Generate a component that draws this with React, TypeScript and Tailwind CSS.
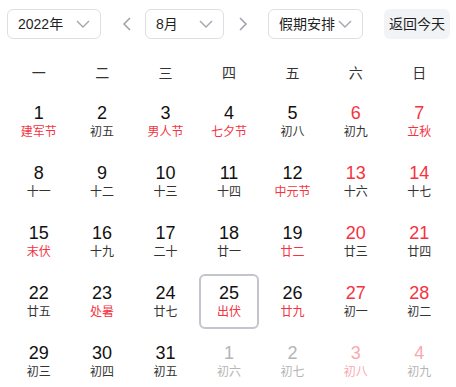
import React from 'react';

type Day = { d: number; l: string; red?: boolean; fest?: boolean; other?: boolean; sel?: boolean };

const font = { fontFamily: '"Liberation Sans", "Noto Sans CJK SC", sans-serif' };

const days: Day[] = [
  { d: 1, l: '建军节', fest: true },
  { d: 2, l: '初五' },
  { d: 3, l: '男人节', fest: true },
  { d: 4, l: '七夕节', fest: true },
  { d: 5, l: '初八' },
  { d: 6, l: '初九', red: true },
  { d: 7, l: '立秋', red: true, fest: true },
  { d: 8, l: '十一' },
  { d: 9, l: '十二' },
  { d: 10, l: '十三' },
  { d: 11, l: '十四' },
  { d: 12, l: '中元节', fest: true },
  { d: 13, l: '十六', red: true },
  { d: 14, l: '十七', red: true },
  { d: 15, l: '末伏', fest: true },
  { d: 16, l: '十九' },
  { d: 17, l: '二十' },
  { d: 18, l: '廿一' },
  { d: 19, l: '廿二', fest: true },
  { d: 20, l: '廿三', red: true },
  { d: 21, l: '廿四', red: true },
  { d: 22, l: '廿五' },
  { d: 23, l: '处暑', fest: true },
  { d: 24, l: '廿七' },
  { d: 25, l: '出伏', fest: true, sel: true },
  { d: 26, l: '廿九', fest: true },
  { d: 27, l: '初一', red: true },
  { d: 28, l: '初二', red: true },
  { d: 29, l: '初三' },
  { d: 30, l: '初四' },
  { d: 31, l: '初五' },
  { d: 1, l: '初六', other: true },
  { d: 2, l: '初七', other: true },
  { d: 3, l: '初八', other: true, red: true, fest: true },
  { d: 4, l: '初九', other: true, red: true },
];

const Chevron = ({ dir = 'down' }: { dir?: 'down' | 'left' | 'right' }) => {
  if (dir === 'down')
    return (
      <svg width="14" height="8" viewBox="0 0 14 8" fill="none" stroke="#a3a6ad" strokeWidth="1.4">
        <path d="M1 1l6 6 6-6" />
      </svg>
    );
  return (
    <svg width="9" height="14" viewBox="0 0 9 14" fill="none" stroke="#9ea1a8" strokeWidth="1.5">
      <path d={dir === 'left' ? 'M8 1L2 7l6 6' : 'M1 1l6 6-6 6'} />
    </svg>
  );
};

const Select = ({ label, w }: { label: string; w: string }) => (
  <div className={`flex h-[30px] ${w} items-center justify-between rounded-[6px] border border-[#dcdfe6] bg-white pl-[10px] pr-[10px] text-[14px] text-[#1f1f1f]`}>
    <span>{label}</span>
    <Chevron />
  </div>
);

export default function App() {
  return (
    <div className="h-[387px] w-[456px] overflow-hidden bg-white" style={font}>
      <div className="flex items-center pl-[7px] pt-[9px]">
        <Select label="2022年" w="w-[94px]" />
        <div className="ml-[21px] flex w-[9px] justify-center">
          <Chevron dir="left" />
        </div>
        <div className="ml-[14px]">
          <Select label="8月" w="w-[79px]" />
        </div>
        <div className="ml-[15px] flex w-[9px] justify-center">
          <Chevron dir="right" />
        </div>
        <div className="ml-[20px]">
          <Select label="假期安排" w="w-[95px]" />
        </div>
        <div className="ml-[21px] flex h-[30px] w-[66px] items-center justify-center rounded-[6px] bg-[#f2f3f5] text-[14px] text-[#1f1f1f]">
          返回今天
        </div>
      </div>

      <div className="mt-[14px] grid grid-cols-7 pl-[7px] pr-[5px]">
        {['一', '二', '三', '四', '五', '六', '日'].map((w) => (
          <div key={w} className="flex h-[40px] items-center justify-center text-[14px] text-[#333]">
            {w}
          </div>
        ))}
      </div>

      <div className="grid grid-cols-7 gap-y-[5px] pl-[7px] pr-[5px] pt-[1px]">
        {days.map((x, i) => {
          const num = x.other
            ? x.red ? 'text-[#f9a9ae]' : 'text-[#b5b5b5]'
            : x.red ? 'text-[#f5333f]' : 'text-[#111]';
          const lunar = x.other
            ? x.fest ? 'text-[#f9a9ae]' : 'text-[#b5b5b5]'
            : x.fest ? 'text-[#f5333f]' : 'text-[#333]';
          return (
            <div key={i} className="flex justify-center">
              <div
                className={`flex h-[55px] w-[60px] flex-col items-center justify-center rounded-[6px] border-2 ${
                  x.sel ? 'border-[#c3c5cc]' : 'border-transparent'
                }`}
              >
                <span className={`text-[18px] leading-[20px] ${num}`}>{x.d}</span>
                <span className={`mt-[1px] text-[12px] leading-[16px] ${lunar}`}>{x.l}</span>
              </div>
            </div>
          );
        })}
      </div>
    </div>
  );
}
